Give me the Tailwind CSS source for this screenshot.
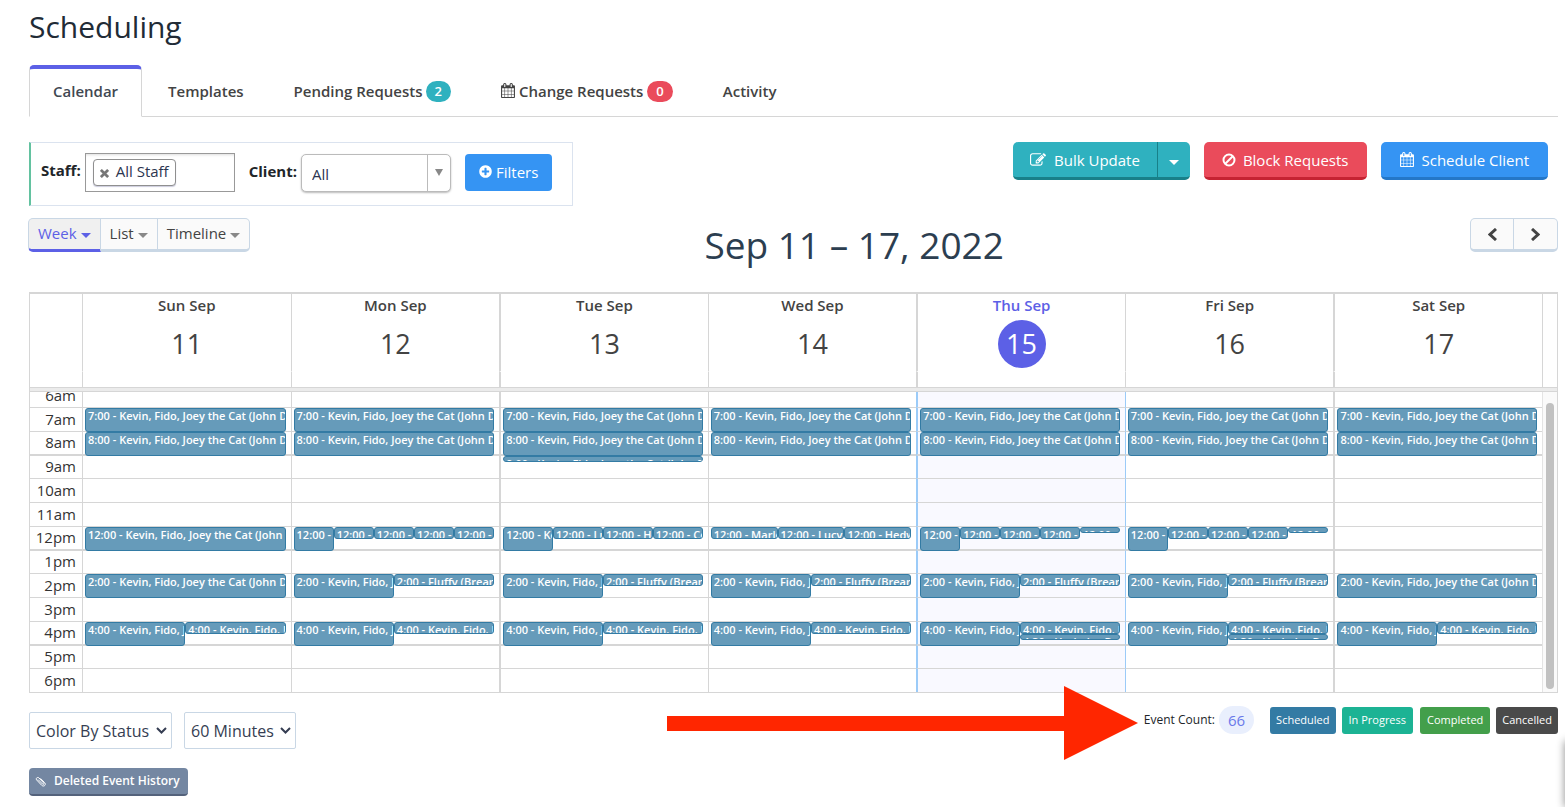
<!DOCTYPE html>
<html lang="en">
<head>
<meta charset="utf-8">
<meta name="viewport" content="width=device-width, initial-scale=1">
<title>Scheduling</title>
<script src="https://cdn.jsdelivr.net/npm/@tailwindcss/browser@4"></script>
</head>
<body class="bg-white font-['Open_Sans',sans-serif] text-[15px] leading-5 text-[#434343] overflow-x-hidden">
<svg class="hidden" aria-hidden="true">
  <symbol id="i-calendar" viewBox="0 0 1664 1792"><path d="M128 1664h288v-288h-288v288zm352 0h320v-288h-320v288zm-352-352h288v-320h-288v320zm352 0h320v-320h-320v320zm-352-384h288v-288h-288v288zm736 736h320v-288h-320v288zm-384-736h320v-288h-320v288zm768 736h288v-288h-288v288zm-384-352h320v-320h-320v320zm-352-864v-288q0-13-9.5-22.5t-22.5-9.5h-64q-13 0-22.5 9.5t-9.5 22.5v288q0 13 9.5 22.5t22.5 9.5h64q13 0 22.5-9.5t9.5-22.5zm736 864h288v-320h-288v320zm-384-384h320v-288h-320v288zm384 0h288v-288h-288v288zm32-480v-288q0-13-9.5-22.5t-22.5-9.5h-64q-13 0-22.5 9.5t-9.5 22.5v288q0 13 9.5 22.5t22.5 9.5h64q13 0 22.5-9.5t9.5-22.5zm384-64v1280q0 52-38 90t-90 38h-1408q-52 0-90-38t-38-90v-1280q0-52 38-90t90-38h128v-96q0-66 47-113t113-47h64q66 0 113 47t47 113v96h384v-96q0-66 47-113t113-47h64q66 0 113 47t47 113v96h128q52 0 90 38t38 90z"/></symbol>
  <symbol id="i-caret" viewBox="0 0 10 5"><path d="M0 0h10l-5 5z"/></symbol>
</svg>

<main class="pl-[29px] pr-[7px] pt-2 relative">
  <h1 class="text-[30px] leading-[38px] text-[#212b36]">Scheduling</h1>

  <nav class="mt-[19px] flex h-[52px] items-stretch border-b border-[#d6d6d6] font-semibold" aria-label="Sections">
    <a href="#" class="-mb-px flex items-center rounded-t-[5px] border border-t-4 border-[#d6d6d6] border-t-[#5c60e6] border-b-white bg-white px-[23px] pb-1 text-[#414852]">Calendar</a>
    <a href="#" class="flex items-center pl-[26px] pr-[25px]">Templates</a>
    <a href="#" class="flex items-center gap-[3px] px-[25px]">Pending Requests <span class="mt-[2px] rounded-full bg-[#2fb1bf] px-[9px] text-[13px] leading-[21px] text-white">2</span></a>
    <a href="#" class="flex items-center gap-1 px-[25px]"><svg class="h-[15px] w-[14px] fill-current"><use href="#i-calendar"/></svg>Change Requests <span class="mt-[2px] rounded-full bg-[#ea4b5b] px-[9px] text-[13px] leading-[21px] text-white">0</span></a>
    <a href="#" class="flex items-center px-[25px]">Activity</a>
  </nav>

  <div class="mt-[25px] flex items-start justify-between">
    <form class="flex h-16 items-center border border-l-2 border-[#dbe3ef] border-l-[#63c2a0] pb-[3px] pl-[10px] pr-5 text-[#2c3550]">
      <span class="mb-[6px] font-bold text-[#212529]">Staff:</span>
      <div class="ml-1 flex h-[39px] w-[150px] items-center border border-[#999] pl-[7px] shadow-[inset_0_3px_3px_-2px_#ddd]">
        <span class="flex h-[27px] items-center gap-[7px] rounded-[4px] border border-[#8f8f8f] bg-white px-[6px] pb-[3px] shadow-[0_1px_1px_#ccd]"><button type="button" class="pt-1" aria-label="Remove All Staff"><svg class="size-[9px] stroke-[#777] stroke-[3]" viewBox="0 0 10 10"><path d="M1 1l8 8M9 1l-8 8"/></svg></button>All Staff</span>
      </div>
      <label for="client" class="mb-1 ml-[14px] font-bold text-[#212529]">Client:</label>
      <div class="relative ml-1">
        <select id="client" class="block h-[38px] w-[150px] appearance-none rounded-[5px] border border-[#bbb] bg-white pl-[10px] pt-[2px] shadow-[0_1px_2px_#bbb]"><option>All</option></select>
        <span class="pointer-events-none absolute inset-y-px right-px flex w-[23px] items-center justify-center border-l border-[#bbb]"><svg class="h-[7px] w-2 fill-[#888]" viewBox="0 0 8 7"><path d="M0 0h8l-4 7z"/></svg></span>
      </div>
      <button type="button" class="ml-[14px] flex h-[37px] items-center gap-1 rounded-[4px] bg-[#3594f3] px-[14px] pb-[2px] font-medium text-white"><svg class="size-[13px] fill-current" viewBox="100 100 1592 1592"><path d="M1344 960v-128q0-26-19-45t-45-19h-256v-256q0-26-19-45t-45-19h-128q-26 0-45 19t-19 45v256h-256q-26 0-45 19t-19 45v128q0 26 19 45t45 19h256v256q0 26 19 45t45 19h128q26 0 45-19t19-45v-256h256q26 0 45-19t19-45zm320-64q0 209-103 385.5t-279.5 279.5-385.5 103-385.5-103-279.5-279.5-103-385.5 103-385.5 279.5-279.5 385.5-103 385.5 103 279.5 279.5 103 385.5z"/></svg>Filters</button>
    </form>
    <div class="mr-[10px] flex gap-[14px] font-medium text-white">
      <div class="flex h-[38px]">
        <button type="button" class="flex items-center gap-2 rounded-l-[5px] border-b-[3px] border-[#188089] bg-[#2fb1bf] pl-[17px] pr-[17px]"><svg class="size-4 fill-current" viewBox="0 0 1792 1792"><path d="M888 1184l116-116-152-152-116 116v56h96v96h56zm440-720q-16-16-33 1l-350 350q-17 17-1 33t33-1l350-350q17-17 1-33zm80 594v190q0 119-84.5 203.5t-203.5 84.5h-832q-119 0-203.5-84.5t-84.5-203.5v-832q0-119 84.5-203.5t203.5-84.5h832q63 0 117 25 15 7 18 23 3 17-9 29l-49 49q-14 14-32 8-23-6-45-6h-832q-66 0-113 47t-47 113v832q0 66 47 113t113 47h832q66 0 113-47t47-113v-126q0-13 9-22l64-64q15-15 35-7t20 29zm-96-738l288 288-672 672h-288v-288zm444 132l-92 92-288-288 92-92q28-28 68-28t68 28l152 152q28 28 28 68t-28 68z"/></svg>Bulk Update</button>
        <button type="button" aria-label="More bulk actions" class="flex w-[33px] items-center justify-center rounded-r-[5px] border-b-[3px] border-l border-[#188089] bg-[#2fb1bf] pt-[5px]"><svg class="h-[5px] w-[10px] fill-current"><use href="#i-caret"/></svg></button>
      </div>
      <button type="button" class="flex h-[38px] items-center gap-[7px] rounded-[5px] border-b-[3px] border-[#c52332] bg-[#ea4b5b] pl-[18px] pr-[19px]"><svg class="size-[14px] fill-none stroke-current stroke-2" viewBox="0 0 14 14"><circle cx="7" cy="7" r="5.5"/><path d="M3 11l8-8"/></svg>Block Requests</button>
      <button type="button" class="flex h-[38px] items-center gap-[7px] rounded-[5px] border-b-[3px] border-[#2477c8] bg-[#3594f3] px-[19px]"><svg class="h-[15px] w-[14px] fill-current"><use href="#i-calendar"/></svg>Schedule Client</button>
    </div>
  </div>

  <div class="mt-3 flex items-start justify-between">
    <div class="-ml-px flex h-[34px]">
      <button type="button" class="flex items-center gap-1 rounded-l-[5px] border border-b-[3px] border-[#c9d7e5] border-b-[#5c60e6] bg-[#f0f0f0] px-[9px] pb-[2px] text-[#5c60e6]">Week<svg class="mt-[5px] h-[5px] w-[10px] fill-current"><use href="#i-caret"/></svg></button>
      <button type="button" class="flex items-center gap-1 border-y border-b-[3px] border-[#c9d7e5] bg-[#fafafa] px-[9px] pb-[2px]">List<svg class="mt-[5px] h-[5px] w-[10px] fill-[#888]"><use href="#i-caret"/></svg></button>
      <button type="button" class="flex items-center gap-1 rounded-r-[5px] border border-b-[3px] border-[#c9d7e5] bg-[#fafafa] px-[9px] pb-[2px]">Timeline<svg class="mt-[5px] h-[5px] w-[10px] fill-[#888]"><use href="#i-caret"/></svg></button>
    </div>
    <h2 class="pr-3 text-[37px] leading-[54px] text-[#2c3e50]">Sep 11 – 17, 2022</h2>
    <div class="flex h-[34px] w-[88px]">
      <button type="button" aria-label="Previous week" class="flex flex-1 items-center justify-center rounded-l-[5px] border border-b-[3px] border-[#c9d7e5] bg-[#fafafa]"><svg class="h-[13px] w-[9px] fill-none stroke-[#434343] stroke-[3]" viewBox="0 0 9 13"><path d="M8 1L2 6.500l6 5.500"/></svg></button>
      <button type="button" aria-label="Next week" class="flex flex-1 items-center justify-center rounded-r-[5px] border border-l-0 border-b-[3px] border-[#c9d7e5] bg-[#fafafa]"><svg class="h-[13px] w-[9px] fill-none stroke-[#434343] stroke-[3]" viewBox="0 0 9 13"><path d="M1 1l6 5.500L1 12"/></svg></button>
    </div>
  </div>

  <section class="mt-5 border border-t-2 border-[#d6d6d6]" aria-label="Week calendar">
    <div class="flex">
      <table class="w-full min-w-0 flex-1 table-fixed border-separate border-spacing-0">
        <thead id="days"></thead>
      </table>
      <div class="w-[15px] border-l border-[#d6d6d6]"></div>
    </div>
    <div class="h-[5px] border-y border-[#d6d6d6] bg-[#ebebeb]"></div>
    <div class="flex h-[300px] overflow-hidden">
      <table class="-mt-[9px] w-full min-w-0 flex-1 table-fixed border-separate border-spacing-0 self-start">
        <tbody id="slots"></tbody>
      </table>
      <div class="w-[15px] border-l border-[#e4e4e4] bg-[#fafafa] px-[3px] pb-[3px] pt-[11px]"><div class="h-full rounded-full bg-[#c1c1c1]"></div></div>
    </div>
  </section>

  <div class="mt-[13px] flex items-start justify-between">
    <div class="mt-[6px] flex gap-3 text-[#353d52]">
      <div class="relative">
        <select aria-label="Color by" class="block h-[37px] appearance-none rounded-[2px] border border-[#c9d7e5] bg-white pl-[6px] pr-[21px] text-[16px]"><option>Color By Status</option></select>
        <svg class="pointer-events-none absolute right-[5px] top-[15px] h-[7px] w-[11px] fill-none stroke-current stroke-2" viewBox="0 0 11 7"><path d="M1 1l4.500 4.500L10 1"/></svg>
      </div>
      <div class="relative">
        <select aria-label="Slot length" class="block h-[37px] appearance-none rounded-[2px] border border-[#c9d7e5] bg-white pl-[6px] pr-[21px] text-[16px]"><option>60 Minutes</option></select>
        <svg class="pointer-events-none absolute right-[5px] top-[15px] h-[7px] w-[11px] fill-none stroke-current stroke-2" viewBox="0 0 11 7"><path d="M1 1l4.500 4.500L10 1"/></svg>
      </div>
    </div>
    <div class="flex items-center text-[11px] font-medium text-white">
      <div class="relative flex items-center gap-1 text-[12px] font-normal text-[#212529]">
        <svg class="absolute right-full top-[-20px] mr-[6px] h-[74px] w-[471px] fill-[#ff2600]" viewBox="0 0 471 74" aria-hidden="true"><path d="M0 30h397V0l74 37-74 37V45H0z"/></svg>
        Event Count: <span class="rounded-full bg-[#e9effd] px-[9px] text-[15px] leading-7 text-[#6979ea]">66</span>
      </div>
      <button type="button" class="ml-4 h-[27px] rounded-[3px] bg-[#337ba4] px-[6px]">Scheduled</button>
      <button type="button" class="ml-[6px] h-[27px] rounded-[3px] bg-[#1cb394] px-[7px]">In Progress</button>
      <button type="button" class="ml-[7px] h-[27px] rounded-[3px] bg-[#439f4b] px-[7px]">Completed</button>
      <button type="button" class="ml-[6px] h-[27px] rounded-[3px] bg-[#4a4a4a] px-[6px]">Cancelled</button>
    </div>
  </div>

  <button type="button" class="mt-[19px] flex h-7 items-center gap-2 rounded-[4px] border-b-2 border-[#54627b] bg-[#7487a2] pl-[6px] pr-2 text-[12px] font-semibold text-white"><svg class="size-[11px] fill-none stroke-current" viewBox="0 0 11 11"><path d="M3 3.500l4.500 4.500c1 1 2 0 1.200-1L4 2C2.500.5.300 2.500 1.700 4l5 5.300c2.300 2 4.800-.6 3-2.600L5.500 2.400"/></svg>Deleted Event History</button>
</main>
<div class="absolute -right-2 bottom-0 h-[66px] w-2 shadow-[0_0_8px_#888]" aria-hidden="true"></div>

<script>
  const days = ['Sun', 'Mon', 'Tue', 'Wed', 'Thu', 'Fri', 'Sat'];
  const today = 4;
  const full = 'Kevin, Fido, Joey the Cat (John Doe)';
  // Hour -> one entry per day; each entry is a list of columns, each column a list of [minutes, time, title].
  const long = h => [[[60, h, full]]];
  const noon = (...list) => list.map(([m, t]) => [[m, '12:00', t]]);
  const five = noon([60, full], [30, 'Marley'], [30, 'Lucy'], [30, 'Hedwig']);
  const two = [[[60, '2:00', full]], [[30, '2:00', 'Fluffy (Breanne)']]];
  const four = [[[60, '4:00', full]], [[30, '4:00', full]]];
  const fourPlus = [[[60, '4:00', full]], [[30, '4:00', full], [15, '4:30', 'Herkules D']]];
  const events = {
    7: days.map(() => long('7:00')),
    8: days.map(() => long('8:00')),
    9: [0, 0, [[[15, '9:00', full]]]],
    12: [
      long('12:00'),
      [...five, ...noon([30, 'Max'])],
      noon([60, full], [30, 'Lucy'], [30, 'Hedwig'], [30, 'Coco']),
      noon([30, 'Marley'], [30, 'Lucy'], [30, 'Hedwig']),
      [...five, ...noon([15, 'Max'])],
      [...five, ...noon([15, 'Max'])]
    ],
    14: [long('2:00'), two, two, two, two, two, long('2:00')],
    16: [four, four, four, four, fourPlus, fourPlus, four]
  };
  const edge = d => [2, 4, 6].includes(d) ? 'border-l-2' : 'border-l';
  const tint = d => d === today ? 'border-l-[#9bcbf8] bg-[#f9f9ff]' : d === today + 1 ? 'border-l-[#9bcbf8]' : '';
  const sizes = { 60: 'h-6', 30: 'h-3', 15: 'h-[6px]' };

  document.getElementById('days').innerHTML =
    '<tr><th class="h-[77px] w-[52px]"></th>' + days.map((n, d) =>
      `<th scope="col" class="${edge(d)} border-[#d6d6d6] p-0 align-top font-semibold ${d === today ? 'text-[#5c60e6]' : ''}">
        <div class="pt-px">${n} Sep</div>
        <div class="mx-auto mt-[5px] flex size-12 items-center justify-center rounded-full text-[27px] font-normal ${d === today ? 'bg-[#5c60e6] text-white' : ''}">${11 + d}</div></th>`).join('') +
    '</tr><tr><td class="h-4 p-0"></td>' + days.map((n, d) => `<td class="${edge(d)} border-[#d6d6d6] border-t border-t-white p-0"></td>`).join('') + '</tr>';

  let html = '';
  for (let h = 6; h <= 18; h++) {
    const label = h < 12 ? h + 'am' : (h > 12 ? h - 12 : 12) + 'pm';
    const height = h % 4 === 1 ? 'h-[23px]' : 'h-6';
    const heavy = [8, 12, 16].includes(h) ? 'border-b' : '';
    html += `<tr><th scope="row" class="w-[52px] ${height} ${heavy} border-t border-[#d6d6d6] p-0 pb-[2px] pr-[6px] text-right font-normal leading-5 text-[#333]">${label}</th>`;
    days.forEach((n, d) => {
      const cols = (events[h] || [])[d];
      html += `<td class="relative border-t ${heavy} ${edge(d)} border-[#d6d6d6] ${tint(d)} p-0">`;
      if (cols) html += '<div class="absolute left-[2px] right-[5px] top-0 z-10 flex items-start">' + cols.map(c =>
        '<div class="min-w-0 flex-1">' + c.map(([m, time, title]) =>
          `<a href="#" class="block ${sizes[m]} overflow-hidden whitespace-nowrap rounded-[3px] border border-[#337ba4] bg-[#669bba] pl-[2px] text-[11px] font-semibold leading-[13px] text-white">${time} - ${title}</a>`).join('') + '</div>').join('') + '</div>';
      html += '</td>';
    });
    html += '</tr>';
  }
  document.getElementById('slots').innerHTML = html;
</script>
</body>
</html>
